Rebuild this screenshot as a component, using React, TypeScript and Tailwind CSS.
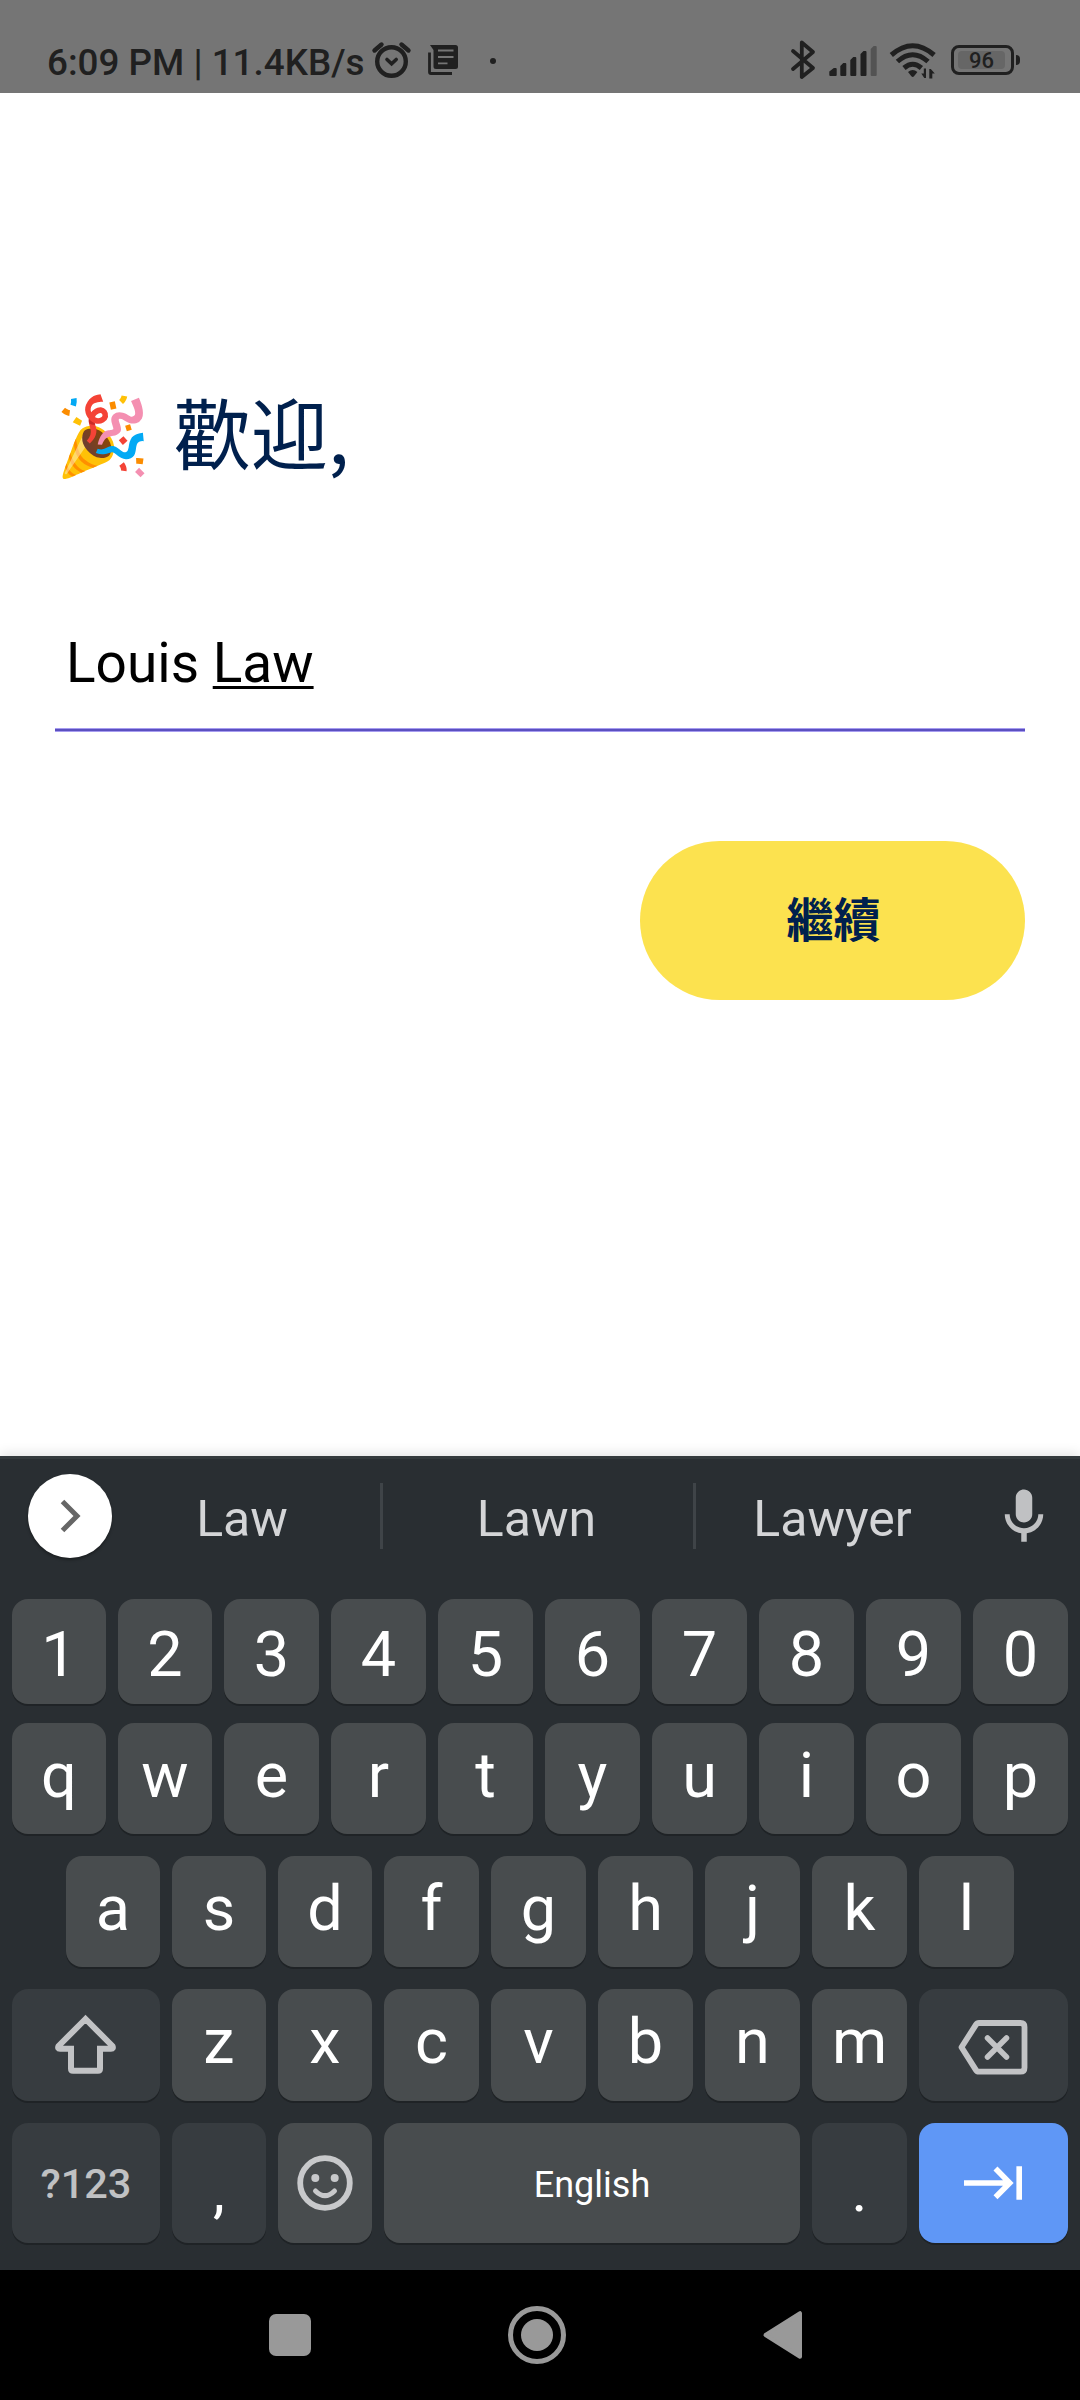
import type { ReactNode } from "react";

function StatusBar() {
  return (
    <header className="flex h-[93px] shrink-0 bg-[#757575] text-[#202020]">
      <div className="ml-[47px] mt-[39px] w-[322px] whitespace-nowrap text-[36.8px] font-medium leading-[48px]">
        6:09 PM | 11.4KB/s
      </div>
      <svg className="mt-10 h-10 w-11" viewBox="369 40 44 40" fill="none" stroke="currentColor" strokeWidth="4.4" strokeLinecap="round">
        <circle cx="391.5" cy="61.5" r="14.3" />
        <path d="M374.500 50.500l7-6M408.500 50.500l-7-6" />
        <path d="M387 59.5l4.6 4.3 4.6-4.3" strokeWidth="3.6" />
      </svg>
      <svg className="ml-[13px] mt-10 h-10 w-9" viewBox="426 40 36 40">
        <path d="M430 45h25.500a2.500 2.500 0 0 1 2.500 2.500v19a2.500 2.500 0 0 1-2.500 2.500h-19.500a2.500 2.500 0 0 1-2.500-2.500v-16.500z" fill="currentColor" />
        <path d="M438 50.500h15.500M438 57h15.500M438 63.300h9.500" stroke="#757575" strokeWidth="1.800" />
        <path d="M429.500 52.500v19.500a1.500 1.500 0 0 0 1.500 1.500h21" fill="none" stroke="currentColor" strokeWidth="2.800" />
      </svg>
      <span className="ml-[28px] mt-[58px] size-1.5 rounded-full bg-[#202020]" />
      <svg className="ml-[292px] mt-[38px] h-[43px] w-7" viewBox="788 38 28 43" fill="none" stroke="currentColor" strokeWidth="3.800" strokeLinecap="round" strokeLinejoin="round">
        <path d="M793 51l20 17-11.200 9V42.500L813 52 793 69" />
      </svg>
      <svg className="ml-[11px] mt-10 h-10 w-[54px]" viewBox="827 40 54 40" fill="currentColor">
        <path d="M829.300 75v-3.500l4.500-3.500h1.900a1 1 0 0 1 1 1v6a1 1 0 0 1-1 1h-5.400a1 1 0 0 1-1-1zM840.300 66l3-3h2a1 1 0 0 1 1 1v11a1 1 0 0 1-1 1h-4a1 1 0 0 1-1-1zM850.300 60l3-3h2a1 1 0 0 1 1 1v17a1 1 0 0 1-1 1h-4a1 1 0 0 1-1-1zM860.500 54l3-3h2a1 1 0 0 1 1 1v23a1 1 0 0 1-1 1h-4a1 1 0 0 1-1-1z" />
        <path d="M870.700 49l3-3h2a1 1 0 0 1 1 1v28a1 1 0 0 1-1 1h-4a1 1 0 0 1-1-1z" fill="#535353" />
      </svg>
      <svg className="ml-[5px] mt-10 h-10 w-[52px]" viewBox="886 40 52 40" fill="none" stroke="currentColor">
        <path d="M891.300 55q21.400-18.500 42.800 0M897.400 61.500q15.300-13.500 30.600 0M904 68q8.700-7.500 17.400 0" strokeWidth="5" />
        <path d="M908 72q4.700-3.800 9.400 0l-3.400 4.200q-1.300 1.400-2.600 0z" fill="currentColor" stroke="none" />
        <path d="M926 68.500v9.500h-1.700l-3-4.500h2.500v-5zM929.300 78.500v-9.500h1.500l4 4.500h-2.500v5z" fill="currentColor" stroke="none" />
      </svg>
      <div className="relative ml-[13px] mt-[45px] flex h-[30px] w-[63px] items-center justify-center rounded-[8px] border-[3px] border-[#202020] p-[3px]">
        <div className="mr-[2px] flex h-[18px] w-[47px] items-center justify-center rounded-sm bg-[#666666] pt-0.5 text-[22px] font-medium leading-none">96</div>
        <span className="absolute -right-[9px] top-[7px] h-2.5 w-1 rounded-r-sm bg-[#202020]" />
      </div>
    </header>
  );
}

function Key({ children, className = "" }: { children?: ReactNode; className?: string }) {
  return (
    <div className={`flex h-full shrink-0 items-center justify-center rounded-[16px] shadow-[0_2px_0_#1f2326] ${className}`}>
      {children}
    </div>
  );
}

/* The first `narrow` keys of a row are one pixel slimmer, so that every row ends on the same edge. */
function LetterKeys({ keys, narrow = 2, pad = "pb-1.5" }: { keys: string; narrow?: number; pad?: string }) {
  return (
    <>
      {keys.split("").map((k, i) => (
        <Key key={k} className={`${i < narrow ? "w-[94px]" : "w-[95px]"} bg-[#484c4e] text-[63px] leading-none text-white ${pad}`}>
          {k}
        </Key>
      ))}
    </>
  );
}

function Keyboard() {
  return (
    <section className="relative flex h-[814px] shrink-0 flex-col border-t-[3px] border-[#343a3d] bg-[#292e32] shadow-[0_-2px_12px_rgba(0,0,0,0.12)]">
      <div className="flex h-[140px] text-[50px] text-[#d4d5d7]">
        <div className="ml-7 mt-[15px] flex size-[84px] items-center justify-center rounded-full bg-white shadow-[0_2px_3px_rgba(0,0,0,0.35)]">
          <svg className="h-10 w-8" viewBox="0 0 32 40" fill="none" stroke="#666" strokeWidth="5">
            <path d="M8.500 5.500L23 20 8.500 34.500" />
          </svg>
        </div>
        <div className="mt-6 flex h-[66px]">
          <div className="flex w-[268px] items-center justify-center pr-2 pt-1.5">Law</div>
          <div className="w-[3px] bg-[#3f4448]" />
          <div className="flex w-[310px] items-center justify-center pr-[3px] pt-1.5">Lawn</div>
          <div className="w-[3px] bg-[#3f4448]" />
          <div className="flex w-[276px] items-center justify-center pr-[3px] pt-1.5">Lawyer</div>
        </div>
        <svg className="ml-[19px] mt-[25px] size-[66px]" viewBox="0 0 24 24" fill="#c0c1c3">
          <path d="M12 14c1.660 0 3-1.340 3-3V5c0-1.660-1.340-3-3-3S9 3.340 9 5v6c0 1.660 1.340 3 3 3zM17.200 11c0 2.760-2.340 5.100-5.200 5.100S6.800 13.760 6.800 11H5c0 3.530 2.610 6.430 6 6.920V21h2v-3.080c3.390-.49 6-3.390 6-6.920z" />
        </svg>
      </div>
      <div className="flex h-[105px] justify-center gap-3">
        <LetterKeys keys="1234567890" pad="pt-1.5" />
      </div>
      <div className="mt-[19px] flex h-[111px] justify-center gap-3">
        <LetterKeys keys="qwertyuiop" />
      </div>
      <div className="mt-[22px] flex h-[111px] justify-center gap-3">
        <LetterKeys keys="asdfghjkl" narrow={3} />
      </div>
      <div className="mt-[22px] flex h-[112px] justify-center gap-3">
        <Key className="w-[148px] bg-[#373c40]">
          <svg className="h-[112px] w-[148px]" viewBox="12 1989 148 112" fill="none" stroke="#c2c3c5" strokeWidth="6" strokeLinejoin="miter">
            <path d="M85.500 2019L58.600 2046q-1.400 2.700 1.400 2.700H71V2068.700q0 2 2 2H98q2 0 2-2V2048.700H111q2.800 0 1.400-2.700z" />
          </svg>
        </Key>
        <LetterKeys keys="zxcvbnm" pad="pb-2" />
        <Key className="w-[149px] bg-[#373c40]">
          <svg className="h-[112px] w-[149px]" viewBox="919 1989 149 112" fill="none" stroke="#c2c3c5" strokeWidth="5.800" strokeLinejoin="round" strokeLinecap="round">
            <path d="M979 2023H1020.500q4 0 4 4V2067.700q0 4-4 4H979q-2 0-3-1.600L961.500 2047.300 976 2024.600q1-1.600 3-1.600z" />
            <path d="M987.500 2038l19 19m0-19l-19 19" strokeWidth="5.500" />
          </svg>
        </Key>
      </div>
      <div className="mt-[22px] flex h-[120px] justify-center gap-3">
        <Key className="w-[148px] bg-[#373c40] pt-0.5 text-[41.500px] font-medium text-[#c0c1c3]">?123</Key>
        <Key className="w-[94px] bg-[#373c40] pt-[15px] text-[60px] leading-none text-white">,</Key>
        <Key className="w-[94px] bg-[#484c4e]">
          <svg className="size-[60px]" viewBox="0 0 60 60" fill="none" stroke="#c8c9cb">
            <circle cx="30" cy="30" r="24.800" strokeWidth="5.800" />
            <circle cx="20.300" cy="25" r="4" fill="#c8c9cb" stroke="none" />
            <circle cx="39.700" cy="25" r="4" fill="#c8c9cb" stroke="none" />
            <path d="M20.500 38q9.500 9.500 19 0" strokeWidth="5" strokeLinecap="round" />
          </svg>
        </Key>
        <Key className="w-[416px] bg-[#484c4e] pt-1 text-[36px] text-white">English</Key>
        <Key className="w-[95px] bg-[#373c40] pt-[15px] text-[60px] leading-none text-white">.</Key>
        <Key className="w-[149px] bg-[#5f97f6]">
          <svg className="h-[120px] w-[149px]" viewBox="919 2123 149 120" fill="none" stroke="#fff" strokeWidth="5.600">
            <path d="M964 2183H1010M995.500 2168.500L1009.700 2183 995.500 2197.300M1019.200 2166.300V2199.700" />
          </svg>
        </Key>
      </div>
    </section>
  );
}

function NavBar() {
  return (
    <nav className="flex h-[130px] shrink-0 items-center bg-black">
      <span className="ml-[269px] h-[42px] w-[42px] rounded-[7px] bg-[#999999]" />
      <span className="ml-[197px] flex size-[58px] items-center justify-center rounded-full border-[5px] border-[#999999]">
        <span className="size-8 rounded-full bg-[#999999]" />
      </span>
      <svg className="ml-[195px] h-[50px] w-[43px]" viewBox="0 0 43 50" fill="#999" stroke="#999" strokeWidth="4" strokeLinejoin="round">
        <path d="M39 3.200V46.800L4.500 25z" />
      </svg>
    </nav>
  );
}

export default function App() {
  return (
    <div className="flex h-[2400px] w-[1080px] flex-col overflow-hidden bg-white font-['Roboto','Noto_Sans_CJK_TC',sans-serif]">
      <StatusBar />
      <main className="flex flex-1 flex-col px-[55px]">
        <h1 className="mt-[285px] flex h-[114px] items-center whitespace-pre text-[77px] font-normal leading-none text-[#00204d]">
          <span className="w-[119px] pt-1 font-['Noto_Color_Emoji',sans-serif]">🎉</span>
          <span className="pb-2.5 font-['Noto_Sans_CJK_JP',sans-serif]">歡迎,</span>
        </h1>
        <div className="mt-[115px] h-[122px] pl-[11px] pt-[24px] text-[55px] leading-[64px] text-black">
          Louis <span className="underline decoration-[3px] underline-offset-[4px]">Law</span>
        </div>
        <div className="-mt-px h-1 shrink-0 border-y border-[#a79cf0] bg-[#5b50c0]" />
        <button className="ml-auto mt-[109px] h-[159px] w-[385px] rounded-full bg-[#fce24f] pb-2 pl-0.5 font-['Noto_Sans_CJK_JP',sans-serif] text-[47px] font-bold leading-none text-[#00204d]">
          繼續
        </button>
      </main>
      <Keyboard />
      <NavBar />
    </div>
  );
}
